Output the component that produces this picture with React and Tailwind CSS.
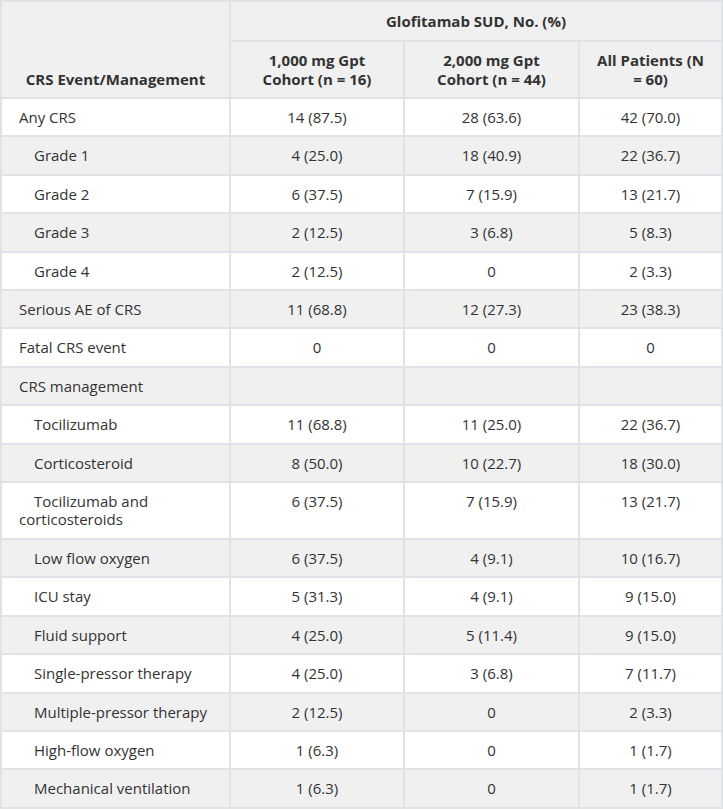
import React from 'react';

const rows = [
  ['Any CRS', '14 (87.5)', '28 (63.6)', '42 (70.0)', false],
  ['Grade 1', '4 (25.0)', '18 (40.9)', '22 (36.7)', true],
  ['Grade 2', '6 (37.5)', '7 (15.9)', '13 (21.7)', true],
  ['Grade 3', '2 (12.5)', '3 (6.8)', '5 (8.3)', true],
  ['Grade 4', '2 (12.5)', '0', '2 (3.3)', true],
  ['Serious AE of CRS', '11 (68.8)', '12 (27.3)', '23 (38.3)', false],
  ['Fatal CRS event', '0', '0', '0', false],
  ['CRS management', '', '', '', false],
  ['Tocilizumab', '11 (68.8)', '11 (25.0)', '22 (36.7)', true],
  ['Corticosteroid', '8 (50.0)', '10 (22.7)', '18 (30.0)', true],
  ['Tocilizumab and corticosteroids', '6 (37.5)', '7 (15.9)', '13 (21.7)', true],
  ['Low flow oxygen', '6 (37.5)', '4 (9.1)', '10 (16.7)', true],
  ['ICU stay', '5 (31.3)', '4 (9.1)', '9 (15.0)', true],
  ['Fluid support', '4 (25.0)', '5 (11.4)', '9 (15.0)', true],
  ['Single-pressor therapy', '4 (25.0)', '3 (6.8)', '7 (11.7)', true],
  ['Multiple-pressor therapy', '2 (12.5)', '0', '2 (3.3)', true],
  ['High-flow oxygen', '1 (6.3)', '0', '1 (1.7)', true],
  ['Mechanical ventilation', '1 (6.3)', '0', '1 (1.7)', true],
];

export default function App() {
  return (
    <div className="bg-white min-h-screen font-['Open_Sans',sans-serif] text-[15px] text-[#333]">
      <table className="table-fixed border-collapse w-[721px]">
        <colgroup>
          <col className="w-[229px]" />
          <col className="w-[174px]" />
          <col className="w-[175px]" />
          <col className="w-[143px]" />
        </colgroup>
        <thead className="bg-[#f0f0f0] font-bold leading-[18.5px]">
          <tr>
            <th rowSpan={2} className="border-2 border-[#dfe2e6] px-4 pb-[9px] align-bottom text-center">
              CRS Event/Management
            </th>
            <th colSpan={3} className="border-2 border-[#dfe2e6] h-[40px] py-[9px] text-center">
              Glofitamab SUD, No. (%)
            </th>
          </tr>
          <tr>
            <th className="border-2 border-[#dfe2e6] px-4 py-[9px] text-center">1,000 mg Gpt Cohort (n = 16)</th>
            <th className="border-2 border-[#dfe2e6] px-4 py-[9px] text-center">2,000 mg Gpt Cohort (n = 44)</th>
            <th className="border-2 border-[#dfe2e6] px-4 py-[9px] text-center">All Patients (N = 60)</th>
          </tr>
        </thead>
        <tbody className="leading-[18.4px]">
          {rows.map(([label, a, b, c, sub], i) => (
            <tr key={label} className={i % 2 === 0 ? 'bg-white' : 'bg-[#f0f0f0]'}>
              <td className={`border-2 border-[#dfe2e6] pl-[17px] pr-2 py-[9px] align-top ${sub ? 'indent-[15px]' : ''}`}>
                {label}
              </td>
              <td className="border-2 border-[#dfe2e6] px-2 py-[9px] align-top text-center">{a}</td>
              <td className="border-2 border-[#dfe2e6] px-2 py-[9px] align-top text-center">{b}</td>
              <td className="border-2 border-[#dfe2e6] px-2 py-[9px] align-top text-center">{c}</td>
            </tr>
          ))}
        </tbody>
      </table>
    </div>
  );
}
